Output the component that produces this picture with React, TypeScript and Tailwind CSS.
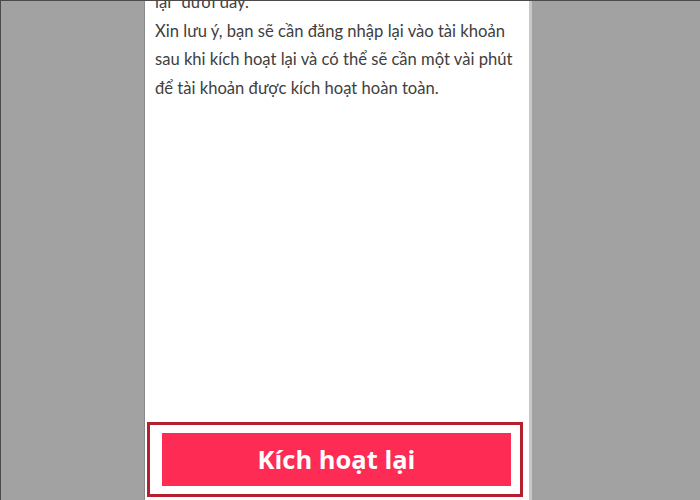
export default function App() {
  return (
    <div className="w-[700px] h-[500px] bg-[#a2a2a2] flex overflow-hidden border-t border-l border-[#4a4a4a]">
      <div className="w-[144px] shrink-0 border-r border-[#8a8a8a]" />
      <div className="w-[387px] shrink-0 h-full bg-white flex flex-col overflow-hidden border-r-[3px] border-[#c8c8c8]">
        <div
          className="mt-[-13px] pl-[10px] pr-1 text-[16.6px] leading-[28.5px] text-[#404040] whitespace-nowrap"
          style={{ fontFamily: "Lato, 'Open Sans', sans-serif" }}
        >
          <p>lại" dưới đây.</p>
          <p>
            Xin lưu ý, bạn sẽ cần đăng nhập lại vào tài khoản
            <br />
            sau khi kích hoạt lại và có thể sẽ cần một vài phút
            <br />
            để tài khoản được kích hoạt hoàn toàn.
          </p>
        </div>
        <div className="flex-1" />
        <div className="ml-[2px] mb-[3px] w-[376px] h-[75px] shrink-0 border-[3px] border-[#b4202f] pl-[12px] pr-[9px] py-[8px]">
          <div
            className="w-full h-full bg-[#fe2c55] flex items-center justify-center text-white text-[25.5px] font-bold"
            style={{ fontFamily: "'Open Sans', sans-serif" }}
          >
            Kích hoạt lại
          </div>
        </div>
      </div>
      <div className="flex-1" />
    </div>
  );
}
